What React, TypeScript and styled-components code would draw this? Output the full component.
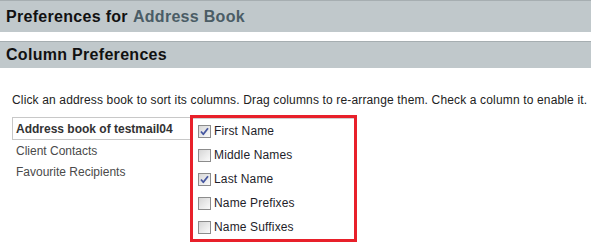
import styled, { createGlobalStyle } from 'styled-components';

const GlobalStyle = createGlobalStyle`
  body {
    margin: 0;
    background: #fff;
    font-family: 'Liberation Sans', Arial, sans-serif;
  }
`;

const S_Page = styled.div`
  width: 591px;
  height: 244px;
  overflow: hidden;
`;

const S_Bar = styled.h2<{ $height: number; $gap: number }>`
  margin: ${(p) => p.$gap}px 0 0;
  height: ${(p) => p.$height}px;
  box-sizing: border-box;
  border-top: 1px solid #a6aeb1;
  background: #c0c8cb;
  padding: 0 6px;
  display: flex;
  align-items: center;
  font-size: 16px;
  font-weight: bold;
  letter-spacing: 0.3px;
  color: #111;
`;

const S_Accent = styled.span`
  color: #4b5d66;
  margin-left: 5px;
`;

const S_Content = styled.div`
  padding: 0 12px;
`;

const S_Hint = styled.p`
  margin: 25px 0 0;
  font-size: 12px;
  line-height: 14px;
  letter-spacing: 0.15px;
  color: #222;
  white-space: nowrap;
`;

const S_Columns = styled.div`
  display: flex;
  align-items: flex-start;
  margin-top: 8px;
`;

const S_BookList = styled.ul`
  list-style: none;
  margin: 2px 0 0;
  padding: 0;
  width: 178px;
`;

const S_Book = styled.li<{ $active?: boolean }>`
  height: ${(p) => (p.$active ? 23 : 21)}px;
  box-sizing: border-box;
  display: flex;
  align-items: center;
  padding-left: ${(p) => (p.$active ? 3 : 4)}px;
  font-size: 12px;
  color: ${(p) => (p.$active ? '#333' : '#4a4a4a')};
  font-weight: ${(p) => (p.$active ? 'bold' : 'normal')};
  border: ${(p) => (p.$active ? '1px solid #c8c8c8' : 'none')};
  border-right: none;
`;

const S_Highlight = styled.div`
  width: 167px;
  box-sizing: border-box;
  border: 3px solid #e8202a;
`;

const S_ColumnList = styled.ul`
  list-style: none;
  margin: 0;
  padding: 0 0 0 5px;
  border-top: 1px solid #cfcfcf;
`;

const S_ColumnRow = styled.li`
  height: 24px;
  display: flex;
  align-items: center;
  gap: 3px;
  font-size: 12px;
  letter-spacing: 0.15px;
  color: #1e1e2a;
`;

const S_Box = styled.span`
  width: 13px;
  height: 13px;
  box-sizing: border-box;
  border: 1px solid #8c8c8c;
  background: linear-gradient(135deg, #d6d6d6 0%, #f0f0f0 70%, #fbfbfb 100%);
  display: flex;
  align-items: center;
  justify-content: center;
`;

const columns = [
  { name: 'First Name', checked: true },
  { name: 'Middle Names', checked: false },
  { name: 'Last Name', checked: true },
  { name: 'Name Prefixes', checked: false },
  { name: 'Name Suffixes', checked: false },
];

const Check = ({ checked }: { checked: boolean }) => (
  <S_Box>
    {checked && (
      <svg width="11" height="11" viewBox="0 0 11 11">
        <path
          d="M2 5.5 L4.3 8.3 L9 2.2"
          fill="none"
          stroke="#4657a0"
          strokeWidth="1.8"
          strokeLinejoin="round"
        />
      </svg>
    )}
  </S_Box>
);

const App = () => {
  return (
    <S_Page>
      <GlobalStyle />
      <S_Bar $height={32} $gap={0}>
        Preferences for<S_Accent>Address Book</S_Accent>
      </S_Bar>
      <S_Bar $height={27} $gap={9}>
        Column Preferences
      </S_Bar>
      <S_Content>
        <S_Hint>
          Click an address book to sort its columns. Drag columns to re-arrange them. Check a
          column to enable it.
        </S_Hint>
        <S_Columns>
          <S_BookList>
            <S_Book $active>Address book of testmail04</S_Book>
            <S_Book>Client Contacts</S_Book>
            <S_Book>Favourite Recipients</S_Book>
          </S_BookList>
          <S_Highlight>
            <S_ColumnList>
              {columns.map((c) => (
                <S_ColumnRow key={c.name}>
                  <Check checked={c.checked} />
                  {c.name}
                </S_ColumnRow>
              ))}
            </S_ColumnList>
          </S_Highlight>
        </S_Columns>
      </S_Content>
    </S_Page>
  );
};

export default App;
